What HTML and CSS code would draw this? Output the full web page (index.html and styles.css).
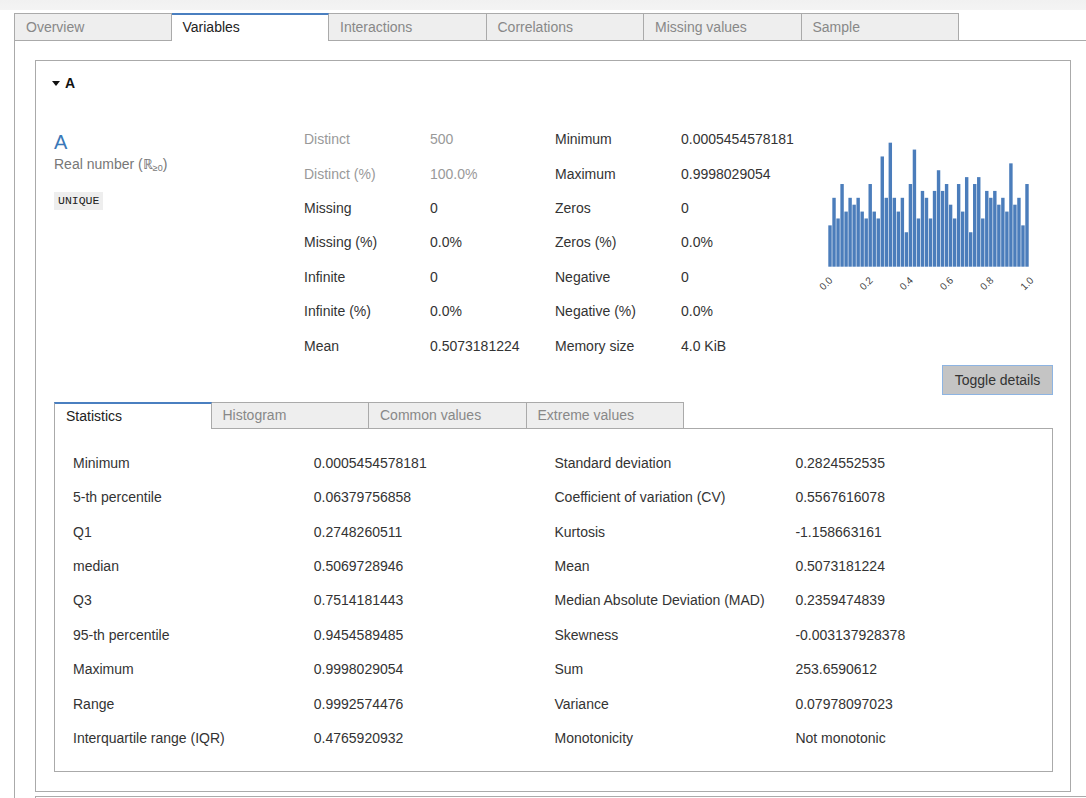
FILE: index.html
```html
<!DOCTYPE html>
<html>
<head>
<meta charset="utf-8">
<link rel="stylesheet" href="styles.css">
</head>
<body>
<div class="page">
  <ul class="tabs top-tabs">
    <li class="tab">Overview</li>
    <li class="tab active">Variables</li>
    <li class="tab">Interactions</li>
    <li class="tab">Correlations</li>
    <li class="tab">Missing values</li>
    <li class="tab">Sample</li>
  </ul>
  <div class="tab-content">
    <div class="var-box">
      <div class="var-header"><span class="caret"></span><span class="var-name">A</span></div>
      <div class="var-body">
        <div class="var-top">
          <div class="var-info">
            <div class="var-title">A</div>
            <div class="var-type">Real number (ℝ<sub>≥0</sub>)</div>
            <span class="badge">UNIQUE</span>
          </div>
          <table class="mini t1">
            <tr class="muted"><td class="lbl">Distinct</td><td>500</td></tr>
            <tr class="muted"><td class="lbl">Distinct (%)</td><td>100.0%</td></tr>
            <tr><td class="lbl">Missing</td><td>0</td></tr>
            <tr><td class="lbl">Missing (%)</td><td>0.0%</td></tr>
            <tr><td class="lbl">Infinite</td><td>0</td></tr>
            <tr><td class="lbl">Infinite (%)</td><td>0.0%</td></tr>
            <tr><td class="lbl">Mean</td><td>0.5073181224</td></tr>
          </table>
          <table class="mini t2">
            <tr><td class="lbl">Minimum</td><td>0.0005454578181</td></tr>
            <tr><td class="lbl">Maximum</td><td>0.9998029054</td></tr>
            <tr><td class="lbl">Zeros</td><td>0</td></tr>
            <tr><td class="lbl">Zeros (%)</td><td>0.0%</td></tr>
            <tr><td class="lbl">Negative</td><td>0</td></tr>
            <tr><td class="lbl">Negative (%)</td><td>0.0%</td></tr>
            <tr><td class="lbl">Memory size</td><td>4.0 KiB</td></tr>
          </table>
          <div class="histo">
            <svg width="235" height="170" viewBox="0 0 235 170" id="hist"></svg>
          </div>
        </div>
        <div class="btn-row"><button class="toggle">Toggle details</button></div>
        <ul class="tabs inner-tabs">
          <li class="tab active">Statistics</li>
          <li class="tab">Histogram</li>
          <li class="tab">Common values</li>
          <li class="tab">Extreme values</li>
        </ul>
        <div class="stats-box">
          <table class="stats">
            <tr><td>Minimum</td><td>0.0005454578181</td></tr>
            <tr><td>5-th percentile</td><td>0.06379756858</td></tr>
            <tr><td>Q1</td><td>0.2748260511</td></tr>
            <tr><td>median</td><td>0.5069728946</td></tr>
            <tr><td>Q3</td><td>0.7514181443</td></tr>
            <tr><td>95-th percentile</td><td>0.9454589485</td></tr>
            <tr><td>Maximum</td><td>0.9998029054</td></tr>
            <tr><td>Range</td><td>0.9992574476</td></tr>
            <tr><td>Interquartile range (IQR)</td><td>0.4765920932</td></tr>
          </table>
          <table class="stats">
            <tr><td>Standard deviation</td><td>0.2824552535</td></tr>
            <tr><td>Coefficient of variation (CV)</td><td>0.5567616078</td></tr>
            <tr><td>Kurtosis</td><td>-1.158663161</td></tr>
            <tr><td>Mean</td><td>0.5073181224</td></tr>
            <tr><td>Median Absolute Deviation (MAD)</td><td>0.2359474839</td></tr>
            <tr><td>Skewness</td><td>-0.003137928378</td></tr>
            <tr><td>Sum</td><td>253.6590612</td></tr>
            <tr><td>Variance</td><td>0.07978097023</td></tr>
            <tr><td>Monotonicity</td><td>Not monotonic</td></tr>
          </table>
        </div>
      </div>
    </div>
    <div class="var-box next"></div>
  </div>
</div>
<script src="script.js"></script>
</body>
</html>
```
FILE: styles.css
```css
* { box-sizing: border-box; }
html, body { margin: 0; padding: 0; }
body {
  font-family: "Liberation Sans", Arial, sans-serif;
  font-size: 14px;
  color: #333;
  background: #fff;
  overflow: hidden;
}
.page {
  padding-top: 13px;
  background: linear-gradient(#f1f1f1 0, #f4f4f4 10px, #fff 10px);
  height: 798px;
}
.tabs {
  list-style: none;
  margin: 0;
  padding: 0;
  display: flex;
  border-bottom: 1px solid #aaa;
}
.tab {
  width: 157.5px;
  height: 27px;
  line-height: 26px;
  padding-left: 11px;
  background: #eee;
  color: #888;
  border: 1px solid #aaa;
  border-left: none;
  border-bottom: none;
  flex: none;
}
.tab:first-child { border-left: 1px solid #aaa; }
.tab.active {
  background: #fff;
  color: #222;
  border-top: 2px solid #4a7fc0;
  line-height: 25px;
  margin-bottom: -1px;
  height: 28px;
}
.top-tabs { margin-left: 14px; }
.tab-content {
  margin-left: 14px;
  border-left: 1px solid #aaa;
  padding: 19px 15px 0 20px;
}
.var-box {
  border: 1px solid #aaa;
  padding-bottom: 19px;
}
.var-box.next {
  margin-top: 4px;
  height: 10px;
  border-right: none;
  margin-right: -15px;
}
.var-header {
  padding: 12px 0 0 16px;
  height: 32px;
  line-height: 20px;
  display: flex;
  align-items: center;
  font-weight: bold;
  color: #111;
}
.caret {
  width: 0; height: 0;
  border-left: 4px solid transparent;
  border-right: 4px solid transparent;
  border-top: 5px solid #111;
  margin-right: 5px;
  margin-top: 1px;
}
.var-body { padding: 29px 17px 0 18px; }
.var-top { display: flex; align-items: flex-start; }
.var-info { width: 250px; padding-top: 9px; flex: none; }
.var-title { color: #3a78b8; font-size: 20px; line-height: 23px; }
.var-type { color: #777; font-size: 14px; line-height: 20px; }
.var-type sub { font-size: 9px; vertical-align: -2px; }
.badge {
  display: inline-block;
  margin-top: 14px;
  font-family: "Liberation Mono", monospace;
  font-size: 11.5px;
  line-height: 18px;
  padding: 0 4px;
  background: #eee;
  color: #222;
}
table { border-collapse: collapse; }
td { padding: 0; height: 34.4px; vertical-align: middle; white-space: nowrap; }
.mini { flex: none; }
.mini.t1 { width: 251px; }
.mini.t2 { width: 263px; }
.mini td.lbl { width: 126px; }
.mini tr.muted td { color: #999; }
.histo { width: 235px; flex: none; margin-top: 8px; }
.histo svg { display: block; }
.btn-row { display: flex; justify-content: flex-end; margin-top: 2px; }
.toggle {
  font-family: "Liberation Sans", Arial, sans-serif;
  font-size: 14px;
  color: #333;
  width: 111px;
  height: 30px;
  background: #c4c4c4;
  border: 1px solid #8db4e2;
  padding: 0;
}
.inner-tabs { margin-top: 7px; }
.inner-tabs .tab { height: 26px; line-height: 25px; }
.inner-tabs .tab.active { height: 27px; line-height: 24px; }
.stats-box {
  border: 1px solid #aaa;
  border-top: none;
  padding: 17px 16px 16px 18px;
  display: flex;
}
.stats { width: 482px; }
.stats td { width: 241px; }
```
FILE: script.js
```js
(function () {
  var counts = [6,10,7,12,8,10,9,10,8,7,12,8,7,16,10,18,10,8,10,5,12,17,7,11,10,7,11,14,11,12,9,7,12,8,13,5,12,13,7,11,10,11,9,10,8,15,9,10,6,12];
  var svg = document.getElementById('hist');
  var ns = 'http://www.w3.org/2000/svg';
  var x0 = 10.3, w = 4.02, base = 136.7, unit = 6.89;
  counts.forEach(function (c, i) {
    var r = document.createElementNS(ns, 'rect');
    r.setAttribute('x', (x0 + i * w).toFixed(2));
    r.setAttribute('y', (base - c * unit).toFixed(2));
    r.setAttribute('width', (w - 0.6).toFixed(2));
    r.setAttribute('height', (c * unit).toFixed(2));
    r.setAttribute('fill', '#4b7dbb');
    svg.appendChild(r);
  });
  ['0.0','0.2','0.4','0.6','0.8','1.0'].forEach(function (t, i) {
    var tx = x0 + i * 40.2 + 5, ty = 151;
    var e = document.createElementNS(ns, 'text');
    e.setAttribute('x', tx);
    e.setAttribute('y', ty);
    e.setAttribute('text-anchor', 'end');
    e.setAttribute('font-size', '10');
    e.setAttribute('font-family', 'Liberation Sans, Arial, sans-serif');
    e.setAttribute('fill', '#444');
    e.setAttribute('transform', 'rotate(-45 ' + tx + ' ' + ty + ')');
    e.textContent = t;
    svg.appendChild(e);
  });
})();
```
